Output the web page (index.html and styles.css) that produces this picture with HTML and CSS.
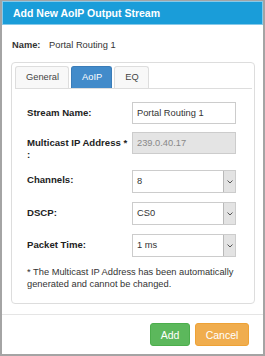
FILE: index.html
```html
<!DOCTYPE html>
<html lang="en">
<head>
    <meta charset="UTF-8">
    <meta name="viewport" content="width=device-width, initial-scale=1.0">
    <title>Add New AoIP Output Stream</title>
    <link rel="stylesheet" href="styles.css">
</head>
<body>
    <div class="dialog">
        <div class="dialog-header">Add New AoIP Output Stream</div>
        <div class="dialog-body">
            <p class="name-row"><b>Name:</b> <span class="name-value">Portal Routing 1</span></p>
            <div class="panel">
                <ul class="tabs">
                    <li class="tab">General</li>
                    <li class="tab active">AoIP</li>
                    <li class="tab">EQ</li>
                </ul>
                <div class="form">
                    <label class="label">Stream Name:</label>
                    <div class="input">Portal Routing 1</div>

                    <label class="label label-wrap">Multicast IP Address * :</label>
                    <div class="input disabled">239.0.40.17</div>

                    <label class="label">Channels:</label>
                    <div class="select">
                        <span class="select-text">8</span>
                        <span class="select-btn"><svg width="6" height="4" viewBox="0 0 6 4"><path d="M0.5 0.5 L3 3 L5.5 0.5" fill="none" stroke="#555" stroke-width="1"/></svg></span>
                    </div>

                    <label class="label">DSCP:</label>
                    <div class="select">
                        <span class="select-text">CS0</span>
                        <span class="select-btn"><svg width="6" height="4" viewBox="0 0 6 4"><path d="M0.5 0.5 L3 3 L5.5 0.5" fill="none" stroke="#555" stroke-width="1"/></svg></span>
                    </div>

                    <label class="label">Packet Time:</label>
                    <div class="select">
                        <span class="select-text">1 ms</span>
                        <span class="select-btn"><svg width="6" height="4" viewBox="0 0 6 4"><path d="M0.5 0.5 L3 3 L5.5 0.5" fill="none" stroke="#555" stroke-width="1"/></svg></span>
                    </div>
                </div>
                <p class="note">* The Multicast IP Address has been automatically generated and cannot be changed.</p>
            </div>
        </div>
        <div class="dialog-footer">
            <button class="btn btn-add">Add</button>
            <button class="btn btn-cancel">Cancel</button>
        </div>
    </div>
</body>
</html>
```

FILE: styles.css
```css
body {
    margin: 0;
    font-family: "Liberation Sans", Arial, sans-serif;
    font-size: 9.3px;
    color: #333;
}
.dialog {
    width: 265px;
    height: 356px;
    box-sizing: border-box;
    border: 2px solid #a4a4a4;
    border-top-width: 1px;
    background: #fff;
    display: flex;
    flex-direction: column;
}
.dialog-header {
    height: 24px;
    box-sizing: border-box;
    border: 1px solid #86c9e9;
    background-color: #1a9dd9;
    color: #fff;
    font-weight: bold;
    font-size: 10.5px;
    line-height: 22px;
    padding-left: 10px;
}
.dialog-body {
    padding: 0 8px 0 9px;
}
.name-row {
    margin: 13px 0 10px;
    padding-left: 1px;
    line-height: 14px;
}
.name-value {
    margin-left: 6px;
}
.panel {
    border: 1px solid #ddd;
    border-radius: 4px;
    padding: 3px 2px 14px 3px;
    height: 242px;
    box-sizing: border-box;
}
.tabs {
    list-style: none;
    margin: 0;
    padding: 0;
    display: flex;
    gap: 2px;
    border-bottom: 1px solid #ddd;
}
.tab {
    height: 22px;
    box-sizing: border-box;
    line-height: 21px;
    padding: 0 9px 0 10px;
    border: 1px solid #ddd;
    border-bottom: none;
    border-radius: 3px 3px 0 0;
    background: #f8f8f8;
    color: #444;
}
.tab.active {
    background-color: #428bca;
    border-color: #3a7cb8;
    color: #fff;
}
.form {
    display: grid;
    grid-template-columns: 105px 104px;
    row-gap: 8px;
    padding: 13px 0 0 12px;
}
.label {
    font-weight: bold;
    font-size: 9.6px;
    line-height: 12px;
    padding-top: 5px;
    color: #222;
}
.label-wrap {
    padding-right: 4px;
}
.input {
    height: 22px;
    box-sizing: border-box;
    border: 1px solid #ccc;
    padding-left: 4px;
    line-height: 20px;
    color: #333;
}
.input.disabled {
    background-color: #e4e4e4;
    color: #888;
}
.select {
    height: 23px;
    box-sizing: border-box;
    border: 1px solid #ccc;
    display: flex;
    margin-top: 1px;
}
.select + .label {
    margin-top: 1px;
}
.select-text {
    flex: 1;
    padding-left: 4px;
    line-height: 21px;
}
.select-btn {
    width: 11px;
    background: #e3e3e3;
    border-left: 1px solid #b9b9b9;
    display: flex;
    align-items: center;
    justify-content: center;
}
.note {
    margin: 10px 0 0 12px;
    line-height: 11.5px;
    color: #333;
}
.dialog-footer {
    margin-top: 10px;
    border-top: 1px solid #e5e5e5;
    display: flex;
    justify-content: flex-end;
    gap: 5px;
    padding: 8px 14px 0 0;
}
.btn {
    height: 23px;
    padding: 0 8px;
    border-radius: 3px;
    font-family: "Liberation Sans", Arial, sans-serif;
    font-size: 10.5px;
    color: #fff;
    cursor: pointer;
}
.btn-add {
    width: 40px;
    background-color: #5cb85c;
    border: 1px solid #4cae4c;
}
.btn-cancel {
    width: 54px;
    background-color: #f0ad4e;
    border: 1px solid #eea236;
}
```
